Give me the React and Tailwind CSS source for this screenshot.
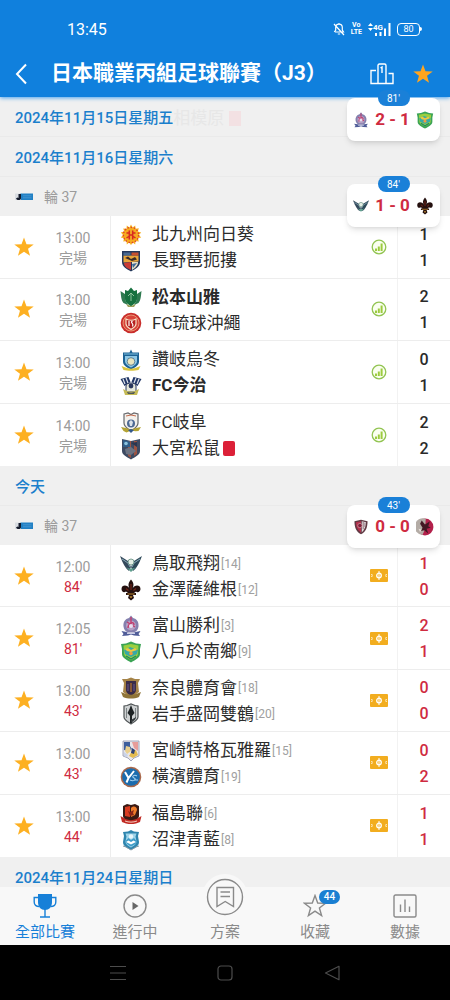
import React from "react";

const STAR =
  "M12 1.6 L14.7 9 L22.6 9.2 L16.4 14 L18.6 21.6 L12 17.2 L5.4 21.6 L7.6 14 L1.4 9.2 L9.3 9 Z";

const crests = {
  kitakyushu: (
    <>
      <path d="M11 0.5l1.6 3 2.6-2.1.3 3.3 3.3-.4-1 3.2 3.4.9-2.3 2.5 2.3 2.5-3.4.9 1 3.2-3.3-.4-.3 3.3-2.6-2.1-1.6 3-1.6-3-2.6 2.1-.3-3.3-3.3.4 1-3.2-3.4-.9L3.1 11 .8 8.500l3.4-.9-1-3.2 3.3.4.3-3.3 2.6 2.100z" fill="#f6b01c" />
      <circle cx="11" cy="11" r="7.6" fill="none" stroke="#e0432c" strokeWidth="1.4" strokeDasharray="1.6 1.6" />
      <circle cx="11" cy="11" r="5.6" fill="#f4a526" />
      <path d="M6.500 9h3M12.500 9h3M9.300 6.500v9M12.700 6.500v9M6.500 14l3-2M15.500 14l-3-2M9.300 11h3.400" stroke="#d8291f" strokeWidth="1.500" fill="none" />
    </>
  ),
  nagano: (
    <>
      <path d="M2 1h18v11c0 5-5 7-9 9.5C7 19 2 17 2 12z" fill="#24395c" />
      <path d="M3.5 5.5h15v6l-15 1z" fill="#e9a53a" />
      <path d="M3.5 2.5h7v3h-7z" fill="#486a92" />
      <path d="M11.5 2.5h7v3h-7z" fill="#c8502e" />
      <path d="M5 8l3-1.5L11 9l4-2 2 2.5-5 1.5z" fill="#3b2c28" />
      <path d="M4 13l7-1v8c-3-1.600-7-3-7-7z" fill="#c93c35" />
      <path d="M12 12h6c0 4-3 6-6 8z" fill="#e8e0c4" />
      <path d="M12 14l5-1-4 5z" fill="#3e6a9c" />
    </>
  ),
  matsumoto: (
    <>
      <path d="M.5 5l4.500 3v6l3 5-4.500-2C1 14 1 9 .5 5zM21.500 5L17 8v6l-3 5 4.500-2c2.500-3 2.500-8 3-12z" fill="#2f7a50" />
      <path d="M5 4l3 1 3-3.500L14 5l3-1v9c0 4-4 5.500-6 7.500-2-2-6-3.500-6-7.500z" fill="#17713f" />
      <path d="M8 10l3-3 3 3M11 7v8" stroke="#8fc29c" strokeWidth="1" fill="none" />
      <path d="M6 18l5 2 5-2-2 3H8z" fill="#9a9f58" />
    </>
  ),
  ryukyu: (
    <>
      <circle cx="11" cy="11" r="10.300" fill="#c92d2b" />
      <circle cx="11" cy="11" r="8" fill="#d9443a" stroke="#efb087" strokeWidth=".8" />
      <path d="M6 7c3 1.500 7 1.500 10 0v5c0 3-3 4-5 5.500C9 16 6 15 6 12z" fill="#b6211f" stroke="#f7dfc4" strokeWidth="1.200" />
      <path d="M9 9v5M12.500 9c-3 2 2 2 0 5.500" stroke="#fff" strokeWidth="1.200" fill="none" />
    </>
  ),
  sanuki: (
    <>
      <path d="M11 .5l1.500 3H19v9c0 4-4 6-8 8-4-2-8-4-8-8v-9h6.500z" fill="#1c6294" />
      <path d="M5 7h12v5c0 3-3 5-6 6.500C8 17 5 15 5 12z" fill="#8ec8e6" />
      <path d="M4 5h14" stroke="#7fc0e0" strokeWidth="1" />
      <circle cx="11" cy="12.500" r="3.800" fill="#e9e6c0" stroke="#486c86" strokeWidth=".8" />
      <path d="M1.500 17l4 1.500c3 1.500 8 1.500 11 0l4-1.500-2 4c-4 1-11 1-15 0z" fill="#d8c33f" />
    </>
  ),
  imabari: (
    <>
      <path d="M.5 4l8-2 2 5-6 4zM21.500 4l-8-2-2 5 6 4z" fill="#213666" />
      <path d="M3 4l2 5M6 3l2 5M19 4l-2 5M16 3l-2 5" stroke="#dfe3ea" strokeWidth="1.200" />
      <path d="M6 11c0-4 10-4 10 0v6H6z" fill="#e6e8dc" stroke="#29365c" strokeWidth="1" />
      <circle cx="11" cy="11" r="2.400" fill="#29365c" />
      <path d="M3 14l4 2c2.500 1 5.500 1 8 0l4-2-2 6H5z" fill="#c5bb56" />
      <path d="M7 17c2.500 1 5.500 1 8 0l-1 1.800H8z" fill="#29365c" />
    </>
  ),
  gifu: (
    <>
      <path d="M4 2l4-1 3 1.500L14 1l4 1v9c0 4-4 6-7 8-3-2-7-4-7-8z" fill="#f4f1ec" stroke="#67696d" strokeWidth="1.200" />
      <path d="M6 4l5-1 5 1" stroke="#c46b4d" strokeWidth="1" fill="none" />
      <circle cx="11" cy="11.500" r="4" fill="#4d6994" />
      <path d="M9 10l2-2 2 2-1 4h-2z" fill="#dde3ea" />
      <path d="M1 15l5 1c3 1.500 7 1.500 10 0l5-1-2.500 4-3 .3L11 18.500l-4.500 2-3-1.500z" fill="#b4a335" />
      <path d="M8 18l3-1 3 1-3 3z" fill="#34598c" />
    </>
  ),
  omiya: (
    <>
      <path d="M2 1l9 2 9-2v12c0 4-5 6-9 8.500C7 19 2 17 2 13z" fill="#3d4a62" />
      <path d="M8 3h3v17l-3-2zM14 3h3v13l-3 2z" fill="#9c5342" />
      <path d="M3 2l7 1.500V9H3z" fill="#315f8a" />
      <circle cx="6" cy="5.500" r="1.800" fill="#8cc4df" />
      <path d="M5 11l6-2 5 4-5 4-5-1z" fill="#6c7382" />
      <path d="M11 5l6-1v5z" fill="#2a3650" />
    </>
  ),
  tottori: (
    <>
      <path d="M0 3l8 5 3 6-2 4C6 16 3 11 0 3z" fill="#34495b" />
      <path d="M22 3l-8 5-3 6 2 4c3-2 6-7 9-15z" fill="#2c4858" />
      <path d="M2 6l6 4 2 4M20 6l-6 4-2 4" stroke="#87a9b7" strokeWidth="1" fill="none" />
      <circle cx="11" cy="9" r="3" fill="#e4efe6" stroke="#5d8a7c" strokeWidth=".8" />
      <path d="M6 14c3 2 7 2 10 0l-5 5z" fill="#5f9f8e" />
    </>
  ),
  kanazawa: (
    <>
      <path d="M11 .5c3 3.500 3 6 1.500 9 2-4 8-4 8 .5 0 3-3 4-4.500 2.500L14 14h2v2h-3l1 3-3 2.500L8 19l1-3H6v-2h2l-2-1.500C4 14 1.500 13 1.500 10c0-4.500 6-4.500 8-.5C8 6.500 8 4 11 .5z" fill="#24100f" />
      <path d="M11 5v6M6 9.500l2.500 2M16 9.500l-2.500 2" stroke="#6e2418" strokeWidth="1.200" />
      <path d="M7.500 15h7M10 17l1 2 1-2" stroke="#b9862f" strokeWidth="1" fill="none" />
    </>
  ),
  toyama: (
    <>
      <path d="M11 .5l2 2.500c4 1 6 4 5.500 8.500-.3 3-2 5-4.500 6H8c-2.500-1-4.200-3-4.500-6C3 7 5 4 9 3z" fill="#8580ae" />
      <circle cx="11" cy="10.500" r="5" fill="#b5a0c4" />
      <path d="M11 2v8M7 7l8 5M8 13c0-4 6-8 6-3" stroke="#c23d6e" strokeWidth="1.400" fill="none" />
      <circle cx="11" cy="11" r="2" fill="#e7dff0" />
      <path d="M1.500 16l5 1c3 2 6 2 9 0l5-1-2 3 1.500 2-6-.5-3-1-3 1-6 .5L3.500 19z" fill="#4f5c98" />
      <path d="M7 18.500h8" stroke="#c9cce6" strokeWidth="1" />
    </>
  ),
  hachinohe: (
    <>
      <path d="M1 3l5-.5L11 .5l5 2 5 .5-1 5v5c0 4-5 6-9 8.500C7 19 2 17 2 13V8z" fill="#3ba455" />
      <path d="M3.500 4.500L11 3l7.500 1.500-.5 8c0 3-4 5-7 6.500-3-1.500-7-3.500-7-6.500z" fill="#9bcf3f" />
      <path d="M4 9l6-3 8 3-1 4-6 3-6-3z" fill="#38a9a6" />
      <path d="M5 8l3-1 3 2 4-2 2 2-3 1-3 1-4-1z" fill="#f0c841" />
      <circle cx="11" cy="12.500" r="1.800" fill="#ee9d42" />
      <path d="M6 15l5 3 5-3" stroke="#1d8a60" strokeWidth="1.400" fill="none" />
    </>
  ),
  nara: (
    <>
      <path d="M2 2h5l4-1.500L15 2h5l-2 4 1 9-8 6-8-6 1-9z" fill="#a58347" />
      <path d="M6 4h10v9c0 3-3 4.500-5 6-2-1.500-5-3-5-6z" fill="#3a2c48" />
      <path d="M11 6v9" stroke="#9a6232" strokeWidth="1.600" />
      <path d="M8 7v7M14 7v7" stroke="#5b4a7a" strokeWidth="1.400" />
      <path d="M1 15l5 2c3 1 7 1 10 0l5-2-2 5c-5 2-11 2-16 0z" fill="#8f7438" />
    </>
  ),
  iwate: (
    <>
      <path d="M4 3l3-.5L11 1l4 1.500 3 .5v11c0 3-4 5-7 7-3-2-7-4-7-7z" fill="#cfd2d3" stroke="#4d5254" strokeWidth="1.200" />
      <path d="M11 2l1.500 4 2 4-2.500 3v7h-2v-7L7.500 10l2-4z" fill="#1d2224" />
      <path d="M6.500 5v10M15.500 5v10" stroke="#7d8486" strokeWidth="1" />
      <path d="M11 17l5-3c0 3-3 4-5 6z" fill="#343a3d" />
    </>
  ),
  miyazaki: (
    <>
      <path d="M3 1h16v15l-5 2-3 3-3-3-5-2z" fill="#e8e6ea" stroke="#8e93ad" strokeWidth=".8" />
      <path d="M4 2h6v4l2 3-3 2-5-1z" fill="#3d5e9e" />
      <path d="M12 2h6v9l-4-3z" fill="#e79c9a" />
      <path d="M6 6l4 1 1 4-4 3-2-3z" fill="#e9cf8e" />
      <path d="M12 11l4-1 2 5-5 3-4-2z" fill="#e3bb50" />
      <path d="M12 8l3 2-1 4-3-1z" fill="#2c3f74" />
      <path d="M4 12l4 3-1 2-3-1z" fill="#c9d3e8" />
    </>
  ),
  yokohama: (
    <>
      <circle cx="11" cy="11" r="10.300" fill="#a9694c" />
      <circle cx="11" cy="11" r="8.800" fill="#1b6cae" />
      <path d="M5 6l3.500 6L14 5M8.500 12l-2 4.500" stroke="#fff" strokeWidth="2" fill="none" />
      <path d="M17 10c-3-2-6 1-3 2s0 4-4 2M14 14h4" stroke="#a9d2ef" strokeWidth="1.100" fill="none" />
    </>
  ),
  fukushima: (
    <>
      <path d="M3 3l4-2 4 1 4-1 4 2v10c0 3-4 5-8 6.500C7 18 3 16 3 13z" fill="#3a1a14" />
      <path d="M5 4l5-1v11l-5-1z" fill="#d93b21" />
      <path d="M11 5c3-3 6-1 6 2l-2 5-4 2z" fill="#ee7d2c" />
      <path d="M8 8l2 1 4-2-1 3 1 2-4 1z" fill="#8c2416" />
      <path d="M.5 13l5 3c4 1.500 7 1.500 11 0l5-3-1.500 6-4 1.500c-4 .8-6 .8-10 0L2 19z" fill="#c12a23" />
      <path d="M5 18c4 1.500 8 1.500 12 0" stroke="#f3cdbf" strokeWidth="1" fill="none" />
    </>
  ),
  numazu: (
    <>
      <path d="M3 3l5-.5L11 1l3 1.500 5 .5-1 4 1 6c0 4-4 6-8 8-4-2-8-4-8-8l1-6z" fill="#2e85ae" />
      <path d="M5.500 4.500h11l-1 3 1 5c0 3-3 4.500-5.500 6-2.500-1.500-5.500-3-5.500-6l1-5z" fill="#9fd5ea" />
      <circle cx="11" cy="7.500" r="2.200" fill="#e7f6fb" />
      <path d="M5.500 12l3-3 2.500 2 3-2 3 3.500c0 2-3 3.500-6 5-2.500-1.500-5-2.500-5.500-5.500z" fill="#3f9cc8" />
      <path d="M6 13l2.500-1.500L11 13l2.500-1.500L16 13l-5 2.500z" fill="#fff" />
      <path d="M3 17l3 1 5 3 5-3 3-1" stroke="#8a9ca6" strokeWidth="1" fill="none" />
    </>
  ),
  kobe: (
    <>
      <path d="M2 3l9-2 9 2c0 8-2 14-9 18C4 17 2 11 2 3z" fill="#5f3943" />
      <path d="M4 4.500l7-1.500v16C6 15 4 10 4 4.500z" fill="#b5324e" />
      <path d="M12 3l6 1.500c0 5-2 10-6 14z" fill="#e4dfe0" />
      <path d="M14 4v10M16.500 5v6" stroke="#83616a" strokeWidth="1.200" />
      <circle cx="9.500" cy="9" r="3" fill="#7c1e38" stroke="#e5b4bb" strokeWidth=".8" />
    </>
  ),
  kashima: (
    <>
      <circle cx="11" cy="11" r="10.300" fill="#b3204b" />
      <path d="M12 .8A10.300 10.300 0 1 0 8 20.800l3-7z" fill="#b4aca6" />
      <path d="M7 3l4 5 6-4-2 6 3 2-5 1 2 6-5-4-4 1 2-4-3-5z" fill="#431723" />
      <path d="M3 13l4 1-2 3z" fill="#e6dfd8" />
    </>
  ),
};

function Crest({ id, className }) {
  return (
    <svg viewBox="0 0 22 22" className={className} aria-hidden="true">
      {crests[id]}
    </svg>
  );
}

function StarShape({ className }) {
  return (
    <svg viewBox="0 0 24 24" className={className} fill="currentColor" aria-hidden="true">
      <path d={STAR} />
    </svg>
  );
}

function ChartBadge() {
  return (
    <svg viewBox="0 0 16 16" className="size-4" aria-hidden="true">
      <circle cx="8" cy="8" r="6.800" fill="#fafff0" stroke="#92c452" strokeWidth="1.300" />
      <path d="M5 12V9.500M7.800 12V7.500M10.600 12V4.500" stroke="#9ccb3e" strokeWidth="2" />
    </svg>
  );
}

function PitchBadge() {
  return (
    <svg viewBox="0 0 18 13" className="h-[13px] w-[18px]" aria-hidden="true">
      <rect width="18" height="13" rx="1" fill="#f2ad1f" />
      <path d="M9 2v9" stroke="#fff" strokeWidth="1" />
      <circle cx="9" cy="6.500" r="2.300" fill="none" stroke="#fff" strokeWidth="1.300" />
      <path d="M1 5.500h1.200v2H1M17 5.500h-1.200v2H17" fill="none" stroke="#fbe3ae" strokeWidth="1" />
    </svg>
  );
}

function LeagueLogo() {
  return (
    <svg viewBox="0 0 18 8" className="h-2 w-[18px]" aria-hidden="true">
      <rect x="5" y=".5" width="13" height="6.500" fill="#2180c4" />
      <rect y=".5" width="6" height="6.500" fill="#d9dde2" />
      <path d="M3.500 1h2.500v4.500C5.500 7.500 2 7.500 1 5.500l1.500-1 1 .5z" fill="#141b2c" />
      <path d="M8 2.800h8.500M8 4.800h8.500" stroke="#4d9bd4" strokeWidth=".8" />
    </svg>
  );
}

function DateRow({ children }) {
  return (
    <h2 className="flex h-10 items-center border-b border-[#eaeaea] px-[15px] pt-1 text-[15px] font-medium text-[#1b7fcc]">
      {children}
    </h2>
  );
}

function RoundRow() {
  return (
    <div className="flex h-[39px] items-center gap-[11px] px-[15px] text-sm text-[#9b9b9b]">
      <LeagueLogo />
      <span>輪 37</span>
    </div>
  );
}

function TeamLine({ team }) {
  return (
    <div className="flex h-[26px] items-center">
      <Crest id={team.crest} className="mr-[10px] size-[22px] shrink-0" />
      <span className={team.win ? "text-[17px] font-bold text-[#2a2a2a]" : "text-[17px] text-[#2c2c2c]"}>{team.name}</span>
      {team.rank && <span className="ml-px text-xs text-[#a0a0a0]">[{team.rank}]</span>}
      {team.red && <span className="ml-[3px] h-[15px] w-3 rounded-xs bg-[#dc2038]" aria-label="紅牌" />}
    </div>
  );
}

function MatchRow({ match }) {
  const live = Boolean(match.minute);
  return (
    <li className="flex border-b border-[#ededed] last:border-b-0">
      <button type="button" aria-label="收藏" className="flex w-12 items-center justify-center text-[#fdb022]">
        <StarShape className="size-[22px]" />
      </button>
      <div className="mr-3 flex w-[50px] flex-col items-center justify-center pt-0.5 text-sm leading-5 text-[#9b9b9b]">
        <time>{match.time}</time>
        {live ? <span className="text-[#cf2b41]">{match.minute}&apos;</span> : <span>完場</span>}
      </div>
      <div className="flex min-w-0 flex-1 flex-col justify-center border-l border-[#ededed] pt-0.5 pl-[9px]">
        <TeamLine team={match.home} />
        <TeamLine team={match.away} />
      </div>
      <div className="flex w-9 items-center justify-center">{live ? <PitchBadge /> : <ChartBadge />}</div>
      <div
        className={
          live
            ? "flex w-[53px] flex-col items-center justify-center border-l border-[#f2f2f2] pt-0.5 text-base leading-[26px] font-medium text-[#cf2b41]"
            : "flex w-[53px] flex-col items-center justify-center border-l border-[#f2f2f2] pt-0.5 text-base leading-[26px] font-medium text-[#2a2a2a]"
        }
      >
        <span>{match.score[0]}</span>
        <span>{match.score[1]}</span>
      </div>
    </li>
  );
}

const finished = [
  { time: "13:00", home: { crest: "kitakyushu", name: "北九州向日葵" }, away: { crest: "nagano", name: "長野琶扼摟" }, score: [1, 1] },
  { time: "13:00", home: { crest: "matsumoto", name: "松本山雅", win: true }, away: { crest: "ryukyu", name: "FC琉球沖繩" }, score: [2, 1] },
  { time: "13:00", home: { crest: "sanuki", name: "讚岐烏冬" }, away: { crest: "imabari", name: "FC今治", win: true }, score: [0, 1] },
  { time: "14:00", home: { crest: "gifu", name: "FC岐阜" }, away: { crest: "omiya", name: "大宮松鼠", red: true }, score: [2, 2] },
];

const today = [
  { time: "12:00", minute: 84, home: { crest: "tottori", name: "鳥取飛翔", rank: 14 }, away: { crest: "kanazawa", name: "金澤薩維根", rank: 12 }, score: [1, 0] },
  { time: "12:05", minute: 81, home: { crest: "toyama", name: "富山勝利", rank: 3 }, away: { crest: "hachinohe", name: "八戶於南鄉", rank: 9 }, score: [2, 1] },
  { time: "13:00", minute: 43, home: { crest: "nara", name: "奈良體育會", rank: 18 }, away: { crest: "iwate", name: "岩手盛岡雙鶴", rank: 20 }, score: [0, 0] },
  { time: "13:00", minute: 43, home: { crest: "miyazaki", name: "宮崎特格瓦雅羅", rank: 15 }, away: { crest: "yokohama", name: "橫濱體育", rank: 19 }, score: [0, 2] },
  { time: "13:00", minute: 44, home: { crest: "fukushima", name: "福島聯", rank: 6 }, away: { crest: "numazu", name: "沼津青藍", rank: 8 }, score: [1, 1] },
];

function FloatingScore({ className, minute, home, away, score }) {
  return (
    <div className={className}>
      <span className="absolute -top-2 left-1/2 flex h-4 w-8 -translate-x-1/2 items-center justify-center rounded-full bg-[#1a80d8] text-[10px] text-white">
        {minute}&apos;
      </span>
      <Crest id={home} className="size-4" />
      <span className="text-[17px] font-bold text-[#cf2b41]">{score}</span>
      <Crest id={away} className="size-[18px]" />
    </div>
  );
}

function StatusBar() {
  return (
    <div className="flex h-[50px] items-end justify-between pr-[28px] pl-[67px]">
      <span className="pb-2 text-base">13:45</span>
      <div className="flex items-center gap-[6px] pb-[14px]">
        <svg viewBox="0 0 12 14" className="h-[14px] w-3" fill="none" stroke="currentColor" strokeWidth="1.200" aria-hidden="true">
          <path d="M2 10h8.500L9.300 8V5.500a3.300 3.300 0 0 0-6.600 0V8L1.300 10M6 1v1.200M4.800 12h2.400M1 2l10 11" />
        </svg>
        <span className="flex flex-col items-center text-[7px] leading-[7px] font-bold">
          <span>Vo</span>
          <span>LTE</span>
        </span>
        <span className="flex items-end">
          <svg viewBox="0 0 5 8" className="mb-[5px] h-2 w-[5px]" fill="currentColor" aria-hidden="true">
            <path d="M2.500 0L5 3H0zM2.500 8L0 5h5z" />
          </svg>
          <span className="-mr-2 mb-1 text-[8px] leading-[9px] font-bold">4G</span>
          <svg viewBox="0 0 16 13" className="h-[13px] w-4" fill="currentColor" aria-hidden="true">
            <path d="M0 10h2v3H0zM4.500 9h2v4h-2zM9 5.500h2V13H9zM13.500 0h2v13h-2z" />
          </svg>
        </span>
        <span className="flex items-center">
          <span className="flex h-[13px] w-[23px] items-center justify-center rounded-[4px] border border-white text-[9px] leading-none">80</span>
          <span className="h-1 w-0.5 rounded-r-full bg-white" />
        </span>
      </div>
    </div>
  );
}

function NavItem({ label, active, children }) {
  return (
    <button
      type="button"
      className={
        active
          ? "flex flex-1 flex-col items-center justify-end gap-[3px] pb-0.5 text-[15px] leading-[22px] text-[#1780d8]"
          : "flex flex-1 flex-col items-center justify-end gap-[3px] pb-0.5 text-[15px] leading-[22px] text-[#8a8a8a]"
      }
    >
      {children}
      <span>{label}</span>
    </button>
  );
}

function BottomNav() {
  return (
    <nav className="relative z-10 flex h-[58px] bg-[#f8f8f8]">
      <NavItem label="全部比賽" active>
        <svg viewBox="0 0 24 24" className="size-6" aria-hidden="true">
          <path d="M5 0h14v8c0 5-3 8-7 8s-7-3-7-8z" fill="currentColor" />
          <path d="M5 3.500H1.200V8c0 3 2 4.500 5 4.500M19 3.500h3.800V8c0 3-2 4.500-5 4.500M12 15v7.500M7 23h10" fill="none" stroke="currentColor" strokeWidth="1.400" />
        </svg>
      </NavItem>
      <NavItem label="進行中">
        <svg viewBox="0 0 24 24" className="size-6" aria-hidden="true">
          <circle cx="12" cy="12" r="11" fill="none" stroke="currentColor" strokeWidth="1.400" />
          <path d="M9.500 8l6 4-6 4z" fill="#666" />
        </svg>
      </NavItem>
      <NavItem label="方案">
        <span className="-mt-6 -mb-0.5 flex size-[46px] shrink-0 items-center justify-center rounded-full bg-[#f8f8f8]">
          <svg viewBox="0 0 38 38" className="size-[38px]" fill="none" stroke="currentColor" strokeWidth="1.400" aria-hidden="true">
            <circle cx="19" cy="19" r="17.500" />
            <path d="M11 9.500h16.500v19L19.200 23.500 11 28.500zM14.500 14h9.500M14.500 18.500h9.500" />
          </svg>
        </span>
      </NavItem>
      <NavItem label="收藏">
        <span className="relative">
          <svg viewBox="0 0 24 24" className="size-6" fill="none" stroke="currentColor" strokeWidth="1.400" aria-hidden="true">
            <path d={STAR} />
          </svg>
          <span className="absolute -top-1 left-4 flex h-[14px] w-[21px] items-center justify-center rounded-full bg-[#1a7fd2] text-[10px] font-medium text-white">44</span>
        </span>
      </NavItem>
      <NavItem label="數據">
        <svg viewBox="0 0 24 24" className="size-6" fill="none" stroke="currentColor" strokeWidth="1.400" aria-hidden="true">
          <rect x="1" y="1" width="22" height="22" rx="1.500" />
          <path d="M7.500 10.500V18M12 5.500V18M16.500 12.500V18" />
        </svg>
      </NavItem>
    </nav>
  );
}

function SystemBar() {
  return (
    <div className="flex h-[55px] items-center justify-center gap-[91px] bg-black text-[#4c4c4c]">
      <button type="button" aria-label="最近">
        <svg viewBox="0 0 16 16" className="block size-4" fill="none" stroke="currentColor" strokeWidth="1.200" aria-hidden="true">
          <path d="M0 1.500h16M0 8h16M0 14.500h16" />
        </svg>
      </button>
      <button type="button" aria-label="主頁">
        <svg viewBox="0 0 16 16" className="block size-4" fill="none" stroke="currentColor" strokeWidth="1.200" aria-hidden="true">
          <rect x="1" y="1" width="14" height="14" rx="3" />
        </svg>
      </button>
      <button type="button" aria-label="返回">
        <svg viewBox="0 0 16 16" className="block size-4" fill="none" stroke="currentColor" strokeWidth="1.200" strokeLinejoin="round" aria-hidden="true">
          <path d="M1.500 8L15 1.300v13.400z" />
        </svg>
      </button>
    </div>
  );
}

export default function App() {
  return (
    <div className="relative flex h-screen flex-col overflow-hidden bg-[#f0f0f0] font-['Roboto','Noto_Sans_CJK_TC',sans-serif]">
      <header className="relative z-10 bg-[#1080dd] text-white shadow-[0_1px_4px_#4aa3ee]">
        <StatusBar />
        <div className="flex h-[47px] items-center pr-[16px] pl-[15px]">
          <button type="button" aria-label="返回" className="mr-6">
            <svg viewBox="0 0 12 22" className="block h-[22px] w-3" fill="none" stroke="currentColor" strokeWidth="2" aria-hidden="true">
              <path d="M11 1.500L2 11l9 9.500" />
            </svg>
          </button>
          <h1 className="flex-1 text-[21px] font-bold whitespace-nowrap">日本職業丙組足球聯賽（J3）</h1>
          <button type="button" aria-label="積分榜" className="mr-[18px]">
            <svg viewBox="0 0 24 22" className="block h-[22px] w-6" fill="none" stroke="currentColor" strokeWidth="1.400" aria-hidden="true">
              <path d="M8 20.500H1V7.500h5M16 20.500h7v-10h-4.500M8 20.500V2.500C8 1.500 8.500 1 9.500 1h5c1 0 1.500.5 1.500 1.500v18zM10.500 5l1.500-1v6" />
            </svg>
          </button>
          <button type="button" aria-label="收藏聯賽" className="text-[#ffa51f]">
            <StarShape className="size-[22px]" />
          </button>
        </div>
      </header>

      <main className="min-h-0 flex-1 overflow-y-auto [scrollbar-width:none]">
        <section>
          <DateRow>
            2024年11月15日星期五
            <span className="text-[17px] font-normal text-[#e7e7e7]" aria-hidden="true">
              相模原
            </span>
            <span className="ml-[5px] h-[15px] w-3 bg-[#f3e1e3]" />
          </DateRow>
        </section>
        <section>
          <DateRow>2024年11月16日星期六</DateRow>
          <RoundRow />
          <ul className="grid min-h-[250px] auto-rows-fr bg-white">
            {finished.map((m) => (
              <MatchRow key={m.home.name} match={m} />
            ))}
          </ul>
        </section>
        <section>
          <DateRow>今天</DateRow>
          <RoundRow />
          <ul className="grid min-h-[312px] auto-rows-fr bg-white">
            {today.map((m) => (
              <MatchRow key={m.home.name} match={m} />
            ))}
          </ul>
        </section>
        <section>
          <DateRow>2024年11月24日星期日</DateRow>
        </section>
      </main>

      <FloatingScore
        className="absolute top-[98px] right-[10px] z-20 flex h-[43px] w-[93px] items-center justify-between rounded-lg bg-white px-[6px] shadow-md"
        minute={81}
        home="toyama"
        away="hachinohe"
        score="2 - 1"
      />
      <FloatingScore
        className="absolute top-[184px] right-[10px] z-20 flex h-[43px] w-[93px] items-center justify-between rounded-lg bg-white px-[6px] shadow-md"
        minute={84}
        home="tottori"
        away="kanazawa"
        score="1 - 0"
      />
      <FloatingScore
        className="absolute top-[505px] right-[10px] z-20 flex h-[43px] w-[93px] items-center justify-between rounded-lg bg-white px-[6px] shadow-md"
        minute={43}
        home="kobe"
        away="kashima"
        score="0 - 0"
      />

      <BottomNav />
      <SystemBar />
    </div>
  );
}
